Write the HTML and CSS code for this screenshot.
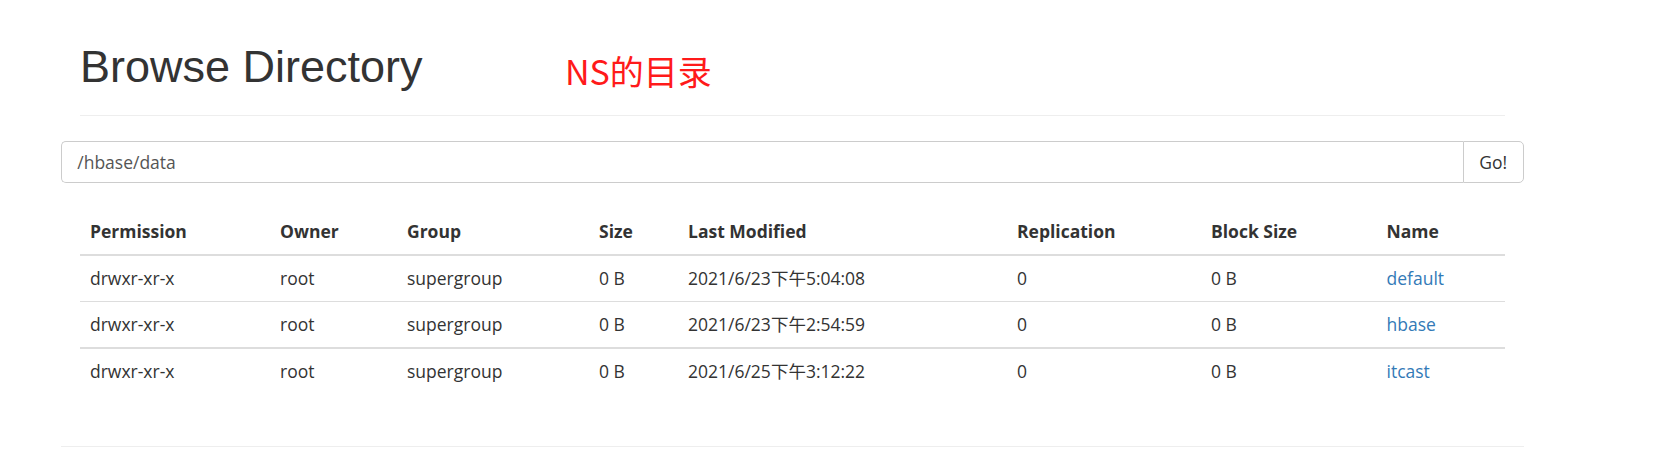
FILE: index.html
```html
<!DOCTYPE html>
<html lang="en">
<head>
<meta charset="utf-8">
<title>Browsing HDFS</title>
<link rel="stylesheet" href="styles.css">
</head>
<body>
<div class="container">
  <div class="page-header">
    <h1 class="title">Browse Directory</h1>
    <span class="note">NS的目录</span>
  </div>
  <form class="input-group">
    <input class="form-control" type="text" value="/hbase/data">
    <button class="btn" type="button">Go!</button>
  </form>
  <table class="table">
    <thead>
      <tr>
        <th class="c1">Permission</th>
        <th class="c2">Owner</th>
        <th class="c3">Group</th>
        <th class="c4">Size</th>
        <th class="c5">Last Modified</th>
        <th class="c6">Replication</th>
        <th class="c7">Block Size</th>
        <th class="c8">Name</th>
      </tr>
    </thead>
    <tbody>
      <tr>
        <td>drwxr-xr-x</td><td>root</td><td>supergroup</td><td>0 B</td><td>2021/6/23下午5:04:08</td><td>0</td><td>0 B</td><td><a href="#">default</a></td>
      </tr>
      <tr>
        <td>drwxr-xr-x</td><td>root</td><td>supergroup</td><td>0 B</td><td>2021/6/23下午2:54:59</td><td>0</td><td>0 B</td><td><a href="#">hbase</a></td>
      </tr>
      <tr class="thick">
        <td>drwxr-xr-x</td><td>root</td><td>supergroup</td><td>0 B</td><td>2021/6/25下午3:12:22</td><td>0</td><td>0 B</td><td><a href="#">itcast</a></td>
      </tr>
    </tbody>
  </table>
  <hr class="footer-rule">
</div>
</body>
</html>
```
FILE: styles.css
```css
html, body {
  margin: 0;
  padding: 0;
  background: #fff;
}
body {
  font-family: "Open Sans", "Noto Sans CJK SC", sans-serif;
  font-size: 17.5px;
  line-height: 25px;
  color: #333;
}
.container {
  margin-left: 61.25px;
  width: 1462.5px;
}
.page-header {
  position: relative;
  margin: 41.75px 18.75px 0;
  padding-bottom: 23.75px;
  border-bottom: 1px solid #eee;
}
.title {
  margin: 0;
  font-family: "Liberation Sans", Arial, sans-serif;
  font-size: 45px;
  line-height: 49.5px;
  font-weight: 400;
  color: #333;
}
.note {
  position: absolute;
  left: 485px;
  top: 4px;
  font-family: "Noto Sans CJK SC", sans-serif;
  font-size: 34px;
  line-height: 49.5px;
  color: #ff1a1a;
}
.input-group {
  display: flex;
  margin: 25px 0 0;
  height: 42px;
}
.form-control {
  flex: 1;
  box-sizing: border-box;
  height: 42px;
  margin: 0;
  padding: 7.5px 15px;
  border: 1px solid #ccc;
  border-right: none;
  border-radius: 5px 0 0 5px;
  font-family: "Open Sans", "Noto Sans CJK SC", sans-serif;
  font-size: 17.5px;
  color: #555;
  background: #fff;
  outline: none;
}
.btn {
  box-sizing: border-box;
  width: 61px;
  height: 42px;
  margin: 0;
  padding: 7.5px 15px;
  border: 1px solid #ccc;
  border-radius: 0 5px 5px 0;
  background: #fff;
  font-family: "Open Sans", "Noto Sans CJK SC", sans-serif;
  font-size: 17.5px;
  color: #333;
}
.table {
  margin: 26px 18.75px 0;
  width: 1425px;
  border-collapse: collapse;
  table-layout: fixed;
}
.table th, .table td {
  box-sizing: border-box;
  padding: 10px;
  text-align: left;
  vertical-align: top;
  line-height: 25px;
}
.table th {
  font-weight: 700;
  border-bottom: 2px solid #ddd;
}
.table td {
  border-top: 1px solid #ddd;
}
.table tbody tr:first-child td {
  border-top: none;
}
.table tr.thick td {
  border-top-width: 2px;
}
.c1 { width: 190px; }
.c2 { width: 127px; }
.c3 { width: 192px; }
.c4 { width: 89px; }
.c5 { width: 329px; }
.c6 { width: 194px; }
.c7 { width: 175.5px; }
.c8 { width: 128.5px; }
.table a {
  color: #337ab7;
  text-decoration: none;
}
.footer-rule {
  margin: 51.5px 0 0;
  border: 0;
  border-top: 1px solid #eee;
  height: 0;
}
```
